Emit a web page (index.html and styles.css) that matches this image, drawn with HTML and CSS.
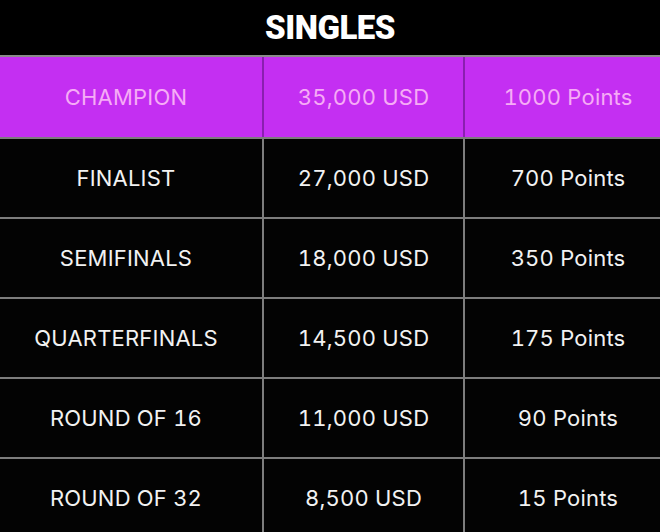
FILE: index.html
```html
<!DOCTYPE html>
<html lang="en">
<head>
<meta charset="utf-8">
<title>Singles</title>
<link rel="stylesheet" href="styles.css">
</head>
<body>
<div class="page">
  <header class="title">SINGLES</header>
  <div class="table">
    <div class="row row-champ">
      <div class="cell">CHAMPION</div>
      <div class="cell">35,000 USD</div>
      <div class="cell">1000 Points</div>
    </div>
    <div class="row">
      <div class="cell">FINALIST</div>
      <div class="cell">27,000 USD</div>
      <div class="cell">700 Points</div>
    </div>
    <div class="row">
      <div class="cell">SEMIFINALS</div>
      <div class="cell">18,000 USD</div>
      <div class="cell">350 Points</div>
    </div>
    <div class="row">
      <div class="cell">QUARTERFINALS</div>
      <div class="cell">14,500 USD</div>
      <div class="cell">175 Points</div>
    </div>
    <div class="row">
      <div class="cell">ROUND OF 16</div>
      <div class="cell">11,000 USD</div>
      <div class="cell">90 Points</div>
    </div>
    <div class="row">
      <div class="cell">ROUND OF 32</div>
      <div class="cell">8,500 USD</div>
      <div class="cell">15 Points</div>
    </div>
  </div>
</div>
</body>
</html>
```

FILE: styles.css
```css
html, body {
  margin: 0;
  padding: 0;
  background: #000;
}
body {
  width: 660px;
  height: 532px;
  overflow: hidden;
  font-family: Inter, "Liberation Sans", sans-serif;
}
.page {
  display: flex;
  flex-direction: column;
}
.title {
  height: 55px;
  display: flex;
  align-items: center;
  justify-content: center;
  color: #fff;
  font-family: Roboto, "Liberation Sans", sans-serif;
  font-weight: 900;
  font-size: 33px;
  letter-spacing: -0.5px;
}
.table {
  margin: 0 -11px 0 -10px;
  display: flex;
  flex-direction: column;
  gap: 2px;
  background: #7d7d7d;
  border-top: 2px solid #8a8a8a;
}
.row {
  display: grid;
  grid-template-columns: 272px 199px 1fr;
  gap: 2px;
  height: 78px;
}
.cell {
  background: #030303;
  color: #f2f2f2;
  font-size: 22px;
  font-weight: 400;
  font-variant-numeric: tabular-nums;
  display: flex;
  align-items: center;
  justify-content: center;
  letter-spacing: 0.2px;
}
.row-champ {
  height: 80px;
  background: #8a1fb0;
}
.row-champ .cell {
  background: #c42ff2;
  color: #f6acf6;
}
```
